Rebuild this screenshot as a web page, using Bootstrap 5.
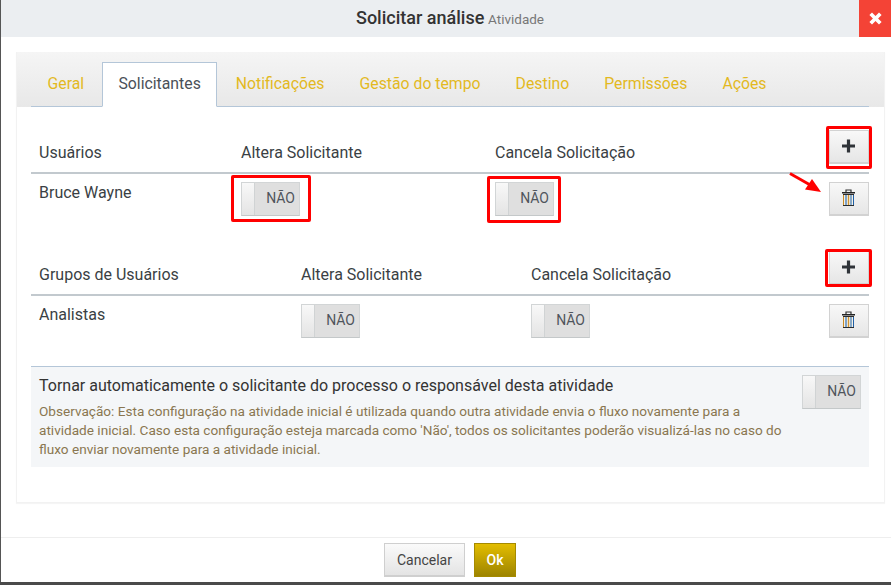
<!DOCTYPE html>
<html lang="pt-BR"><head><meta charset="utf-8"><title>Solicitar análise</title>
<link rel="stylesheet" href="https://cdn.jsdelivr.net/npm/bootstrap@5.3.0/dist/css/bootstrap.min.css">
<style>
html,body{height:585px;overflow:hidden}
body{font-family:Roboto,"Liberation Sans",sans-serif;font-size:15px;color:#3a3f44;background:#fff;position:relative}
.shell{height:582px;border-left:1px solid #555;display:flex;flex-direction:column}
.base-strip{height:3px;background:#4a4a4a}
.top-bar{height:37px;background:#ebeef1;position:relative;flex:none;padding:0 0 2px 8px}
.top-title{font-size:18px;font-weight:500;color:#333}
.top-sub{font-size:13.5px;font-weight:400;color:#777}
.close-x{position:absolute;right:0;top:0;width:32px;height:37px;background:#f44336;border:0;padding:0}
.main-area{flex:1;padding:15px 6px 0 15px}
.sheet{height:451px;border:1px solid #f2f2f2;border-top:0;box-shadow:0 1px 1px rgba(0,0,0,.04);position:relative}
.tab-strip{height:55px;padding:10px 15px 0 14px;background:linear-gradient(#f5f5f5,#e8e8e8)}
.tab-strip .nav-tabs{--bs-nav-tabs-border-color:#b4c6d8;height:45px;border-bottom:1px solid #b4c6d8;gap:0}
.tab-strip .nav-link{font-size:15.8px;color:#e3b91f;padding:11px 15.5px 0;height:45px;border:1px solid transparent;border-radius:0;margin:0 2px 0 0;line-height:19px}
.tab-strip .nav-item:first-child .nav-link{padding-right:14.8px}
.tab-strip .nav-link.active{color:#4a5058;background:#fff;border-color:#b4c6d8 #b4c6d8 #fff}
.content{padding:0 15px 0 14px}
.grid-head,.grid-row{display:flex;align-items:flex-start}
.grid-head{height:45px;border-bottom:2px solid #c2c9ce}
.grid-row{padding-top:8px}
.first-head{margin-top:23px;height:44px}
.cell-user{padding-left:8px}
.w-a{width:210px}.w-b{width:254px}.w-c{width:334px}
.w-d{width:270px}.w-e{width:230px}.w-f{width:298px}
.head-label{display:block;padding-top:14px;font-size:16px;line-height:18px}
.head-lower .head-label{padding-top:15px}
.row-label{display:block;line-height:18px;padding-top:2px;font-size:16px}
.toggle-x{display:flex;width:59px;height:34px;background:#dfdfdf;border:1px solid #d2d5d6;border-bottom-color:#c4c8c9;font-size:14px;color:#4f555c;align-items:center}
.toggle-knob{width:13px;height:100%;background:linear-gradient(#f8f8f8,#e4e4e4);border-right:1px solid #d0d3d4;flex:none}
.toggle-text{flex:1;text-align:right;padding:0 4px 2px 0}
.marked{position:relative;display:inline-block}
.marked::after{content:"";position:absolute;border:3px solid #f00;border-radius:2px;pointer-events:none}
.mark-switch-a::after{inset:-7px -11px -6px -10px}
.mark-switch-b::after{inset:-6px -7px -7px -8px}
.mark-btn-a::after{inset:-4px -3px -5px -3px}
.mark-btn-b::after{inset:-2px -3px -2px -4px}
.act-btn{width:40px;height:34px;padding:0 2px 2px 0;border:1px solid #d2d2d2;border-bottom-width:2px;border-radius:0;background:linear-gradient(#f8f8f8,#e6e6e6);display:flex;align-items:center;justify-content:center}
.act-col{margin-left:auto}
.row-one{height:77px}
.row-two{height:70px}
.info-box{height:101px;border-top:1px solid #b4c6d8;background:#f4f6f8;padding:8px 8px 0;display:flex;justify-content:space-between}
.info-title{font-size:16px;line-height:19px;color:#333;margin-top:1px}
.info-note{font-size:13.6px;line-height:19px;color:#8a7650;margin-top:7px;width:755px}
.info-box .toggle-x{flex:none}
.foot-bar{height:45px;border-top:1px solid #eee;flex:none;display:flex;justify-content:center;gap:9px;padding:5px 0 0 8px;margin-top:auto}
.cancel-btn,.ok-btn{height:34px;border-radius:0;font-size:14px;padding:0;line-height:1}
.cancel-btn{width:81px;border:1px solid #cfcfcf;border-bottom-width:2px;background:linear-gradient(#fafafa,#e4e4e4);color:#444}
.ok-btn{width:42px;border:1px solid #a58a00;background:linear-gradient(#e3bd00,#9d8400);color:#fff;font-weight:500}
.note-arrow{position:absolute;left:788px;top:172px;width:36px;height:22px}
</style></head><body>
<svg width="0" height="0" class="d-none"><defs>
<symbol id="ico-trash" viewBox="0 0 13 17"><path d="M4 3V1h5v2" fill="none" stroke="#333" stroke-width="1.200"/><rect y="3" width="13" height="1.500" fill="#222"/><rect x="1" y="5" width="11" height="12" fill="#f3f0e6"/><path d="M1.500 6v10.500" stroke="#c98a24" stroke-width="1"/><path d="M4 6v10.500" stroke="#3f78b8" stroke-width="1.300"/><path d="M6.500 6v10.500" stroke="#cf9232" stroke-width="1.300"/><path d="M9 6v10.500" stroke="#4f84b8" stroke-width="1.300"/><path d="M11.500 6v10.500" stroke="#205fa6" stroke-width="1"/><path d="M1 5.500h11M1 16.500h11" stroke="#2b2b2b" stroke-width="1"/></symbol>
<symbol id="ico-plus" viewBox="0 0 13 14"><path d="M4.900 .5h3.200v5H13v3H8.100v5H4.900v-5H0v-3h4.900z" fill="#2f3338"/></symbol>
</defs></svg>
<div class="shell">
 <div class="top-bar d-flex align-items-center justify-content-center">
  <span><span class="top-title">Solicitar análise</span> <span class="top-sub">Atividade</span></span>
  <button class="close-x d-flex align-items-center justify-content-center" aria-label="Fechar"><svg width="13" height="13" viewBox="0 0 13 13"><path d="M3 .4 6.500 3.900 10 .4 12.600 3 9.100 6.500 12.600 10 10 12.600 6.500 9.100 3 12.600.4 10 3.900 6.500.4 3z" fill="#fff"/></svg></button>
 </div>
 <div class="main-area">
  <div class="sheet">
   <div class="tab-strip">
    <ul class="nav nav-tabs">
     <li class="nav-item"><a class="nav-link" href="#">Geral</a></li>
     <li class="nav-item"><a class="nav-link active" href="#">Solicitantes</a></li>
     <li class="nav-item"><a class="nav-link" href="#">Notificações</a></li>
     <li class="nav-item"><a class="nav-link" href="#">Gestão do tempo</a></li>
     <li class="nav-item"><a class="nav-link" href="#">Destino</a></li>
     <li class="nav-item"><a class="nav-link" href="#">Permissões</a></li>
     <li class="nav-item"><a class="nav-link" href="#">Ações</a></li>
    </ul>
   </div>
   <div class="content">
    <div class="grid-head first-head">
     <div class="cell-user w-a"><span class="head-label">Usuários</span></div>
     <div class="w-b"><span class="head-label">Altera Solicitante</span></div>
     <div class="w-c"><span class="head-label">Cancela Solicitação</span></div>
     <div class="act-col"><span class="marked mark-btn-a d-block"><button class="act-btn" aria-label="Adicionar"><svg width="13" height="14"><use href="#ico-plus"/></svg></button></span></div>
    </div>
    <div class="grid-row row-one">
     <div class="cell-user w-a"><span class="row-label">Bruce Wayne</span></div>
     <div class="w-b"><span class="marked mark-switch-a"><span class="toggle-x"><span class="toggle-knob"></span><span class="toggle-text">NÃO</span></span></span></div>
     <div class="w-c"><span class="marked mark-switch-b"><span class="toggle-x"><span class="toggle-knob"></span><span class="toggle-text">NÃO</span></span></span></div>
     <div class="act-col"><button class="act-btn" aria-label="Excluir"><svg width="13" height="17"><use href="#ico-trash"/></svg></button></div>
    </div>
    <div class="grid-head head-lower">
     <div class="cell-user w-d"><span class="head-label">Grupos de Usuários</span></div>
     <div class="w-e"><span class="head-label">Altera Solicitante</span></div>
     <div class="w-f"><span class="head-label">Cancela Solicitação</span></div>
     <div class="act-col"><span class="marked mark-btn-b d-block"><button class="act-btn" aria-label="Adicionar"><svg width="13" height="14"><use href="#ico-plus"/></svg></button></span></div>
    </div>
    <div class="grid-row row-two">
     <div class="cell-user w-d"><span class="row-label">Analistas</span></div>
     <div class="w-e"><span class="toggle-x"><span class="toggle-knob"></span><span class="toggle-text">NÃO</span></span></div>
     <div class="w-f"><span class="toggle-x"><span class="toggle-knob"></span><span class="toggle-text">NÃO</span></span></div>
     <div class="act-col"><button class="act-btn" aria-label="Excluir"><svg width="13" height="17"><use href="#ico-trash"/></svg></button></div>
    </div>
    <div class="info-box">
     <div>
      <div class="info-title">Tornar automaticamente o solicitante do processo o responsável desta atividade</div>
      <div class="info-note">Observação: Esta configuração na atividade inicial é utilizada quando outra atividade envia o fluxo novamente para a atividade inicial. Caso esta configuração esteja marcada como 'Não', todos os solicitantes poderão visualizá-las no caso do fluxo enviar novamente para a atividade inicial.</div>
     </div>
     <span class="toggle-x"><span class="toggle-knob"></span><span class="toggle-text">NÃO</span></span>
    </div>
   </div>
  </div>
 </div>
 <div class="foot-bar">
  <button class="btn cancel-btn">Cancelar</button>
  <button class="btn ok-btn">Ok</button>
 </div>
</div>
<div class="base-strip"></div>
<svg class="note-arrow" viewBox="0 0 36 22"><path d="M2 1.500 24 14" stroke="#f00" stroke-width="2.800"/><path d="M33 20 17 17.500 24 7z" fill="#f00"/></svg>
<script src="https://cdn.jsdelivr.net/npm/bootstrap@5.3.0/dist/js/bootstrap.bundle.min.js"></script>
</body></html>
